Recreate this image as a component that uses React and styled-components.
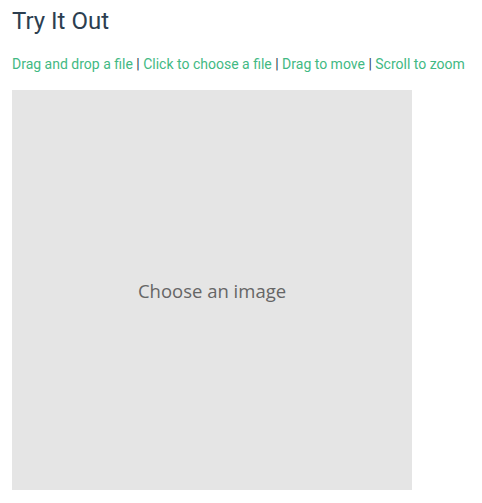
import React from "react";
import styled, { createGlobalStyle } from "styled-components";

const Global = createGlobalStyle`
  html, body { margin: 0; padding: 0; background: #fff; }
  body { font-family: Roboto, "Liberation Sans", sans-serif; color: #2c3e50; }
`;

const Page = styled.div`
  padding: 6px 12px 12px;
`;

const Title = styled.h2`
  margin: 0;
  font-size: 24px;
  font-weight: 400;
  line-height: 30px;
  color: #2c3e50;
`;

const Hints = styled.p`
  margin: 18px 0 16px;
  font-size: 14px;
  line-height: 20px;
  color: #2c3e50;
`;

const Hint = styled.span`
  color: #42b983;
`;

const Drop = styled.div`
  width: 400px;
  height: 400px;
  background: #e5e5e5;
  display: flex;
  align-items: center;
  justify-content: center;
  cursor: pointer;
`;

const Placeholder = styled.span`
  font-family: "Open Sans", "Noto Sans", sans-serif;
  font-size: 18.5px;
  color: #666;
`;

const hints = ["Drag and drop a file", "Click to choose a file", "Drag to move", "Scroll to zoom"];

export default function App() {
  return (
    <Page>
      <Global />
      <Title>Try It Out</Title>
      <Hints>
        {hints.map((h, i) => (
          <React.Fragment key={h}>
            {i > 0 && " | "}
            <Hint>{h}</Hint>
          </React.Fragment>
        ))}
      </Hints>
      <Drop>
        <Placeholder>Choose an image</Placeholder>
      </Drop>
    </Page>
  );
}
